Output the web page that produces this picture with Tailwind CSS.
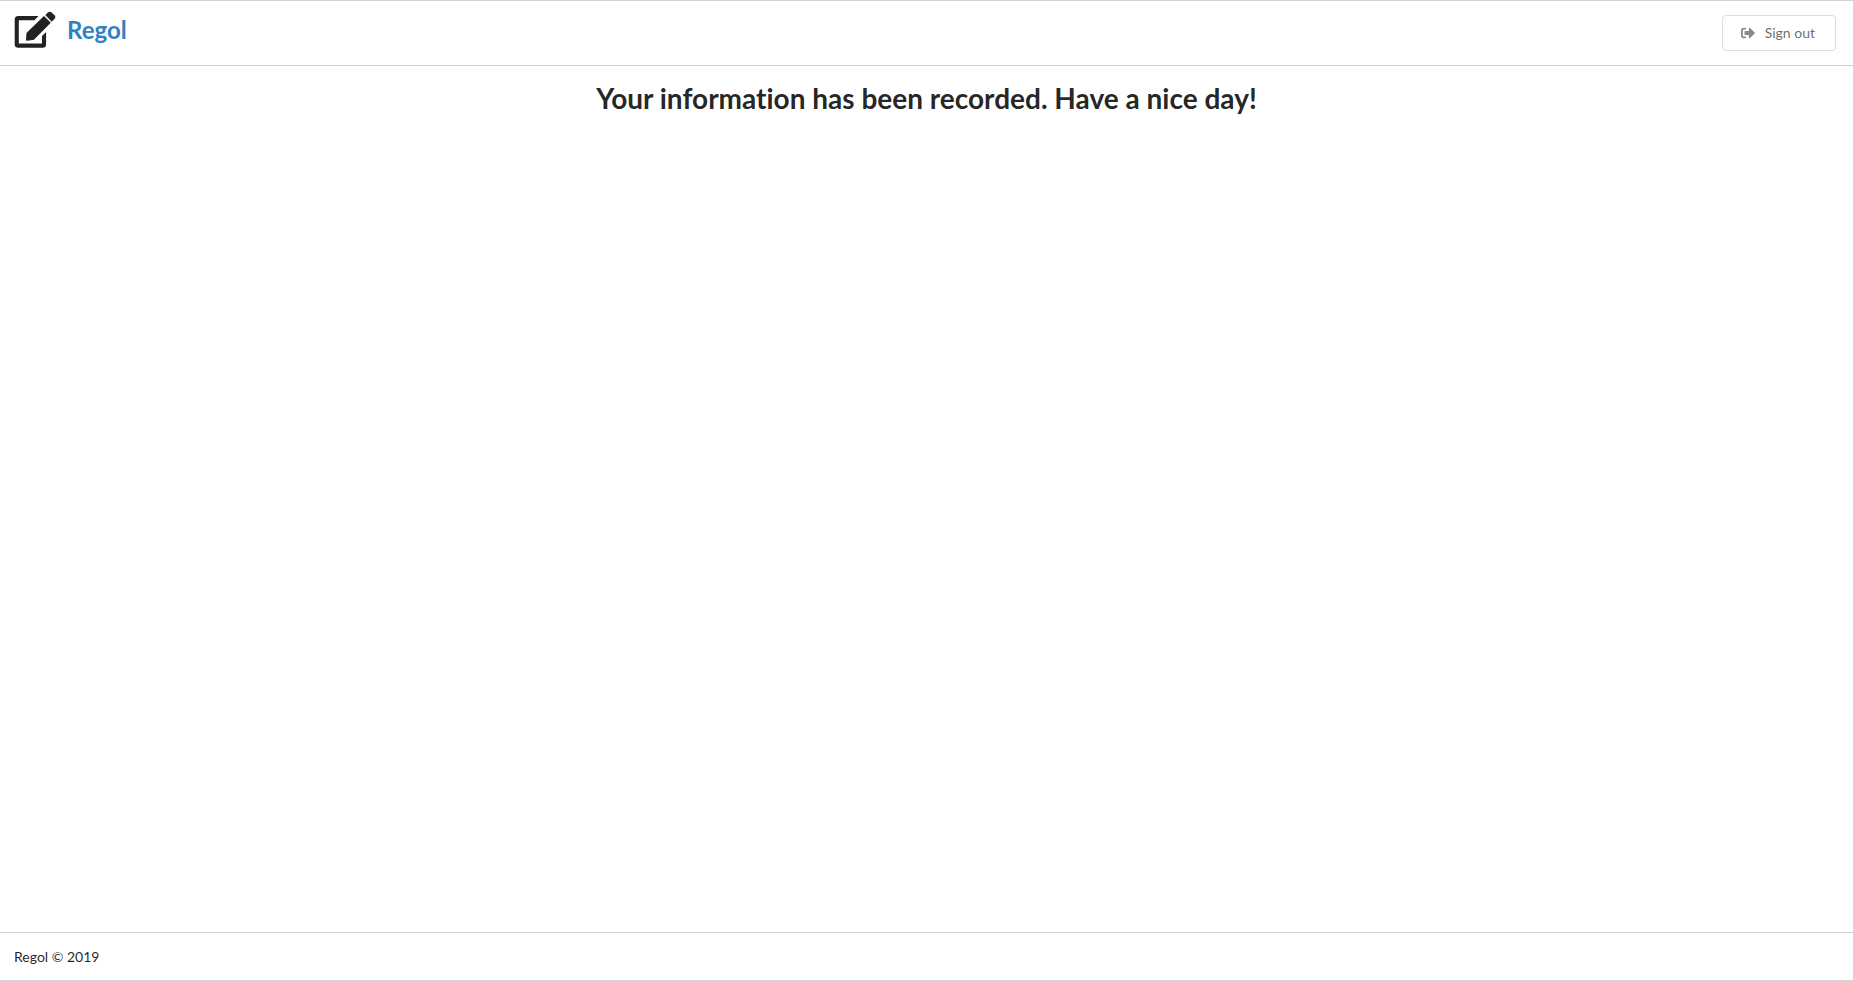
<!DOCTYPE html>
<html lang="en">
<head>
<meta charset="utf-8">
<title>Regol</title>
<script src="https://cdn.jsdelivr.net/npm/@tailwindcss/browser@4"></script>
</head>
<body class="flex min-h-screen flex-col border-y border-[#d2d2d3] bg-white font-[Lato,sans-serif] text-sm text-black/87 [font-variant-ligatures:none]">
<header class="flex h-[65px] items-center justify-between border-b border-[#d2d2d3] pl-3.5 pr-[17px]">
<a href="#" class="mb-1.5 flex items-center gap-2.5 text-2xl font-bold text-[#3182c4]">
<svg class="h-[38px] w-[43px] text-[#222]" viewBox="0 0 43 38" fill="currentColor" aria-hidden="true">
<path d="M24.6 5H4.2Q.7 5 .7 8.5V33.3Q.7 36.8 4.2 36.8H28.6Q32.1 36.8 32.1 33.3V21L28 25V32.5H4.8V9.2H20.4Z"/>
<path d="M30 5L36.8 11.8L20.2 28.4Q19.6 29 18.6 29.1L13.2 29.8Q11.9 29.9 12 28.6L12.4 22.8Q12.5 21.8 13.2 21.2Z"/>
<path d="M31.3 4.1L34 1.4Q35.8 0 37.6 1.4L40.8 4.6Q42.2 6.2 40.7 7.8L37.7 10.7Z"/>
</svg>
<span>Regol</span>
</a>
<button type="button" class="flex h-9 items-center gap-2.5 rounded border border-[#dedede] pl-[18px] pr-5 text-black/60">
<svg class="h-3.5 w-3.5 text-[#888]" viewBox="0 0 512 512" fill="currentColor" aria-hidden="true"><path d="M180 448H96c-53 0-96-43-96-96V160c0-53 43-96 96-96h84v64H96c-18 0-32 14-32 32v192c0 18 14 32 32 32h84zM497 273L329 441c-15 15-41 4-41-17v-96H152c-13 0-24-11-24-24v-96c0-13 11-24 24-24h136V88c0-21 26-32 41-17l168 168c9 10 9 25 0 34z"/></svg>
<span>Sign out</span>
</button>
</header>
<main class="grow px-4 pt-3.5">
<h1 class="text-center text-[28px] leading-9 font-bold">Your information has been recorded. Have a nice day!</h1>
</main>
<footer class="flex h-12 items-center border-t border-[#d2d2d3] px-3.5">
<p>Regol © 2019</p>
</footer>
</body>
</html>
